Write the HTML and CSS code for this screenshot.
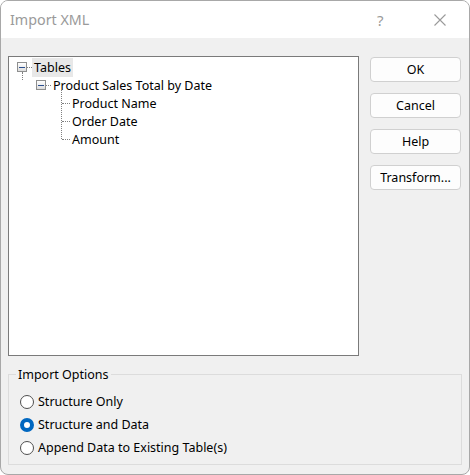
FILE: index.html
```html
<!DOCTYPE html>
<html>
<head>
<meta charset="utf-8">
<link rel="stylesheet" href="styles.css">
</head>
<body>
<div class="window">
  <div class="titlebar">
    <span class="title">Import XML</span>
    <span class="help">?</span>
    <span class="close"><svg width="12" height="12" viewBox="0 0 12 12"><path d="M0.5 0.5L11.5 11.5M11.5 0.5L0.5 11.5" stroke="#9a9a9a" stroke-width="1.1" fill="none"/></svg></span>
  </div>
  <div class="content">
    <div class="top">
      <div class="tree">
        <div class="row lvl1">
          <span class="exp"><span class="minus"></span></span><span class="hdot"></span><span class="label sel">Tables</span>
        </div>
        <div class="children1">
          <span class="vline v1"></span>
          <div class="row lvl2">
            <span class="exp"><span class="minus"></span></span><span class="hdot"></span><span class="label">Product Sales Total by Date</span>
          </div>
          <div class="children2">
            <span class="vline v2"></span>
            <div class="row lvl3"><span class="hdot long"></span><span class="label">Product Name</span></div>
            <div class="row lvl3"><span class="hdot long"></span><span class="label">Order Date</span></div>
            <div class="row lvl3"><span class="hdot long"></span><span class="label">Amount</span></div>
          </div>
        </div>
      </div>
      <div class="buttons">
        <button class="btn">OK</button>
        <button class="btn">Cancel</button>
        <button class="btn">Help</button>
        <button class="btn">Transform...</button>
      </div>
    </div>
    <fieldset class="options">
      <legend>Import Options</legend>
      <label class="radio"><span class="circle"></span>Structure Only</label>
      <label class="radio"><span class="circle checked"></span>Structure and Data</label>
      <label class="radio"><span class="circle"></span>Append Data to Existing Table(s)</label>
    </fieldset>
  </div>
</div>
</body>
</html>
```
FILE: styles.css
```css
html, body {
  margin: 0;
  padding: 0;
  background: #ffffff;
}
body {
  width: 470px;
  height: 475px;
  font-family: "Noto Sans", "Open Sans", "Liberation Sans", sans-serif;
  font-size: 12.5px;
  color: #000;
}
.window {
  box-sizing: border-box;
  width: 470px;
  height: 475px;
  border: 1px solid #a8a8a8;
  border-radius: 8px;
  overflow: hidden;
  display: flex;
  flex-direction: column;
  background: #f0f0f0;
}
.titlebar {
  height: 37px;
  background: #ffffff;
  display: flex;
  align-items: center;
  flex: none;
}
.title {
  margin-left: 9px;
  font-size: 14.3px;
  color: #9a9a9a;
  flex: 1;
}
.help {
  font-size: 15px;
  color: #9a9a9a;
  width: 14px;
  margin-right: 43px;
}
.close {
  display: flex;
  margin-right: 23px;
}
.content {
  padding: 18px 0 0 7px;
  flex: 1;
  display: flex;
  flex-direction: column;
}
.top {
  display: flex;
  gap: 11px;
  align-items: flex-start;
}
.tree {
  box-sizing: border-box;
  width: 351px;
  height: 300px;
  background: #fff;
  border: 1px solid #7a7a7a;
  padding: 1px 0 0 8px;
}
.row {
  height: 18px;
  display: flex;
  align-items: center;
  position: relative;
}
.exp {
  box-sizing: border-box;
  width: 10px;
  height: 10px;
  border: 1px solid #8e8f8f;
  background: linear-gradient(#ffffff, #dcdcdc);
  display: flex;
  align-items: center;
  justify-content: center;
  flex: none;
}
.minus {
  width: 6px;
  height: 1px;
  background: #2b4f8f;
}
.hdot {
  width: 5px;
  margin: 0;
  border-top: 1px dotted #808080;
  flex: none;
}
.hdot.long {
  width: 8px;
  margin: 0 2px 0 0;
}
.label {
  padding: 0 2px;
  line-height: 19px;
  white-space: nowrap;
}
.label.sel {
  background: #e8e8e8;
}
.children1 {
  position: relative;
  padding-left: 19px;
}
.children2 {
  position: relative;
  padding-left: 26px;
}
.vline {
  position: absolute;
  border-left: 1px dotted #808080;
}
.v1 {
  left: 5px;
  top: -4px;
  height: 8px;
}
.v2 {
  left: 25px;
  top: -4px;
  height: 49px;
}
.lvl3 .label {
  padding-left: 0;
}
.buttons {
  display: flex;
  flex-direction: column;
  gap: 11px;
  padding-top: 1px;
}
.btn {
  box-sizing: border-box;
  width: 91px;
  height: 25px;
  background: #fdfdfd;
  border: 1px solid #d0d0d0;
  border-radius: 4px;
  font-family: inherit;
  font-size: 12.5px;
  color: #000;
  padding: 0;
}
.options {
  box-sizing: border-box;
  width: 454px;
  margin: 10px 0 0 0;
  padding: 7px 0 0 11px;
  border: 1px solid #dcdcdc;
  height: 99px;
}
.options legend {
  margin-left: -4px;
  padding: 0 2px;
  font-size: 12.5px;
}
.radio {
  display: flex;
  align-items: center;
  height: 23px;
}
.circle {
  box-sizing: border-box;
  width: 14px;
  height: 14px;
  border-radius: 50%;
  border: 1px solid #4f4f4f;
  background: #fff;
  margin-right: 4px;
  flex: none;
}
.circle.checked {
  border: 4px solid #0067c0;
  background: #fff;
}
```
